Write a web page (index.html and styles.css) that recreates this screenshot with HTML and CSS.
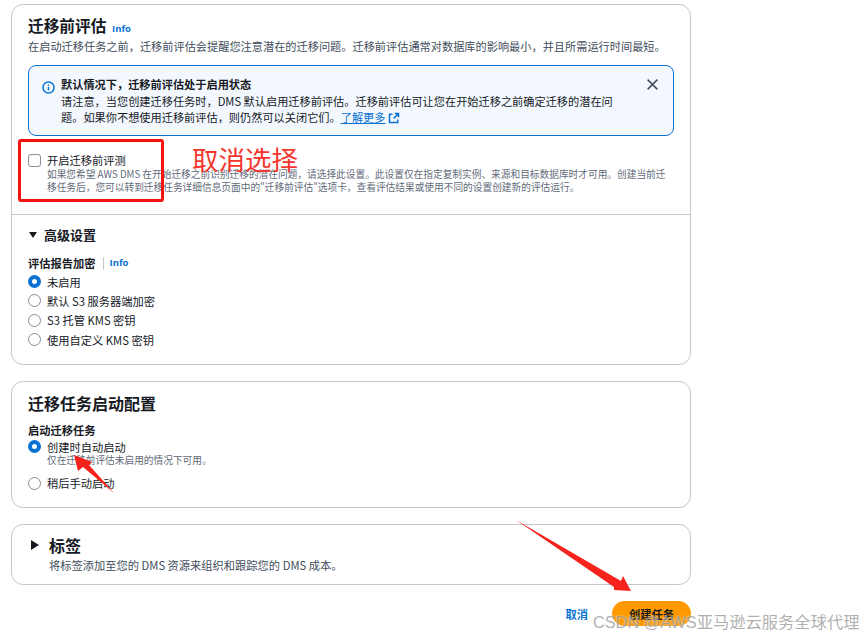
FILE: index.html
```html
<!DOCTYPE html>
<html lang="zh">
<head>
<meta charset="utf-8">
<title>迁移前评估</title>
<link rel="stylesheet" href="styles.css">
</head>
<body>
<main class="page">
  <section class="card card-assess">
    <div class="pad-top">
      <h2 class="title title-main">迁移前评估 <a class="info info-title">Info</a></h2>
      <p class="desc">在启动迁移任务之前，迁移前评估会提醒您注意潜在的迁移问题。迁移前评估通常对数据库的影响最小，并且所需运行时间最短。</p>
      <div class="alert">
        <svg class="alert-icon" viewBox="0 0 16 16" width="13" height="13"><circle cx="8" cy="8" r="6.8" fill="none" stroke="#0972d3" stroke-width="1.8"/><path d="M8 7v4.6M8 4.2v1.6" stroke="#0972d3" stroke-width="1.8" fill="none"/></svg>
        <div class="alert-body">
          <div class="alert-head">默认情况下，迁移前评估处于启用状态</div>
          <div class="alert-text">请注意，当您创建迁移任务时，DMS 默认启用迁移前评估。迁移前评估可让您在开始迁移之前确定迁移的潜在问题。如果你不想使用迁移前评估，则仍然可以关闭它们。<a class="learn">了解更多</a> <svg class="ext" viewBox="0 0 16 16" width="12" height="12"><path d="M9 2H14V7M14 2L7.5 8.5M6 3H2V14H13V10" fill="none" stroke="#0972d3" stroke-width="2"/></svg></div>
        </div>
        <svg class="alert-close" viewBox="0 0 16 16" width="13" height="13"><path d="M2 2L14 14M14 2L2 14" stroke="#414d5c" stroke-width="1.8" fill="none"/></svg>
      </div>
      <div class="check-row">
        <span class="checkbox"></span>
        <div class="check-text">
          <div class="check-label">开启迁移前评测</div>
          <div class="check-desc">如果您希望 AWS DMS 在开始迁移之前识别迁移的潜在问题，请选择此设置。此设置仅在指定复制实例、来源和目标数据库时才可用。创建当前迁移任务后，您可以转到迁移任务详细信息页面中的"迁移前评估"选项卡，查看评估结果或使用不同的设置创建新的评估运行。</div>
        </div>
      </div>
    </div>
    <div class="advanced">
      <div class="expander"><span class="tri-down"></span>高级设置</div>
      <div class="field-label">评估报告加密<span class="sep"></span><a class="info">Info</a></div>
      <div class="radios">
        <div class="radio-row"><span class="radio on"></span>未启用</div>
        <div class="radio-row"><span class="radio"></span>默认 S3 服务器端加密</div>
        <div class="radio-row"><span class="radio"></span>S3 托管 KMS 密钥</div>
        <div class="radio-row"><span class="radio"></span>使用自定义 KMS 密钥</div>
      </div>
    </div>
  </section>

  <section class="card card-start">
    <h2 class="title title-start">迁移任务启动配置</h2>
    <div class="field-label field-start">启动迁移任务</div>
    <div class="radio-row tight"><span class="radio on"></span>创建时自动启动</div>
    <div class="radio-desc">仅在迁移前评估未启用的情况下可用。</div>
    <div class="radio-row later"><span class="radio"></span>稍后手动启动</div>
  </section>

  <section class="card card-tags">
    <h2 class="title tag-title"><span class="tri-right"></span>标签</h2>
    <p class="tag-desc">将标签添加至您的 DMS 资源来组织和跟踪您的 DMS 成本。</p>
  </section>

  <div class="actions">
    <a class="cancel">取消</a>
    <button class="primary">创建任务</button>
  </div>
</main>

<div class="red-box"></div>
<div class="red-note">取消选择</div>
<svg class="arrows" viewBox="0 0 864 637" width="864" height="637">
  <path d="M114 493L83 467L78 471L74 455L92 462L89 465Z" fill="#f5231b"/>
  <path d="M516 520L621 581L623 576L631 591L614 590L614 587Z" fill="#f5231b"/>
</svg>
<div class="watermark">CSDN @AWS亚马逊云服务全球代理</div>
</body>
</html>
```
FILE: styles.css
```css
* { box-sizing: border-box; }
html, body { margin: 0; padding: 0; height: 637px; overflow: hidden; background: #fff; }
body { font-family: "Noto Sans CJK SC", "Open Sans", sans-serif; color: #16191f; font-size: 11.25px; position: relative; }
.page { width: 680px; margin-left: 11px; padding-top: 4px; display: flex; flex-direction: column; }
.card { border: 1px solid #c6c6cd; border-radius: 12px; background: #fff; }
.card-assess { height: 361px; }
.pad-top { padding: 9px 16px 0; height: 210px; border-bottom: 1px solid #c6c6cd; }
.title { margin: 0; font-size: 16px; line-height: 24px; font-weight: 700; color: #16191f; }
.title-main { font-size: 15.7px; height: 24px; }
.info { color: #0972d3; font-size: 9.5px; font-weight: 700; font-family: "Open Sans", sans-serif; }
.info-title { margin-left: 2px; }
.desc { margin: 0; font-size: 11.2px; line-height: 16px; color: #414d5c; white-space: nowrap; }
.alert { margin-top: 11px; height: 71px; border: 1px solid #0972d3; border-radius: 8px; background: #f2f8fd; padding: 10px 13px; display: flex; position: relative; }
.alert-icon { margin-top: 5px; flex: none; }
.alert-body { margin-left: 6px; width: 562px; }
.alert-head { font-weight: 700; line-height: 17px; font-size: 11.2px; }
.alert-text { line-height: 16px; font-size: 11.2px; color: #16191f; }
.learn { color: #0972d3; text-decoration: underline; }
.ext { vertical-align: -2px; }
.alert-close { position: absolute; right: 14px; top: 12px; }
.check-row { display: flex; margin-top: 16px; }
.checkbox { width: 13px; height: 13px; border: 1.5px solid #8c8c94; border-radius: 3px; margin-top: 2px; flex: none; }
.check-text { margin-left: 6px; }
.check-label { font-size: 11.25px; line-height: 16px; }
.check-desc { font-size: 9.7px; line-height: 13px; color: #5f6b7a; }
.advanced { padding: 10px 16px 0; }
.expander { font-size: 13px; font-weight: 700; line-height: 20px; display: flex; align-items: center; }
.tri-down { width: 0; height: 0; border-left: 4.5px solid transparent; border-right: 4.5px solid transparent; border-top: 6px solid #16191f; margin: 0 7px 0 1px; }
.field-label { font-size: 11.25px; font-weight: 700; line-height: 16px; margin-top: 10px; display: flex; align-items: center; }
.sep { width: 1px; height: 13px; background: #c6c6cd; margin: 0 6px 0 7px; }
.radios { margin-top: 1px; }
.radio-row { display: flex; align-items: center; height: 19.3px; font-size: 11.25px; color: #16191f; }
.radio { width: 13px; height: 13px; border-radius: 50%; border: 1.5px solid #8c8c94; margin-right: 6px; flex: none; background: #fff; }
.radio.on { border: 4px solid #0972d3; }
.card-start { margin-top: 16px; height: 127px; padding: 9px 16px 0; }
.title-start { line-height: 24px; }
.field-start { margin-top: 7px; line-height: 16px; }
.tight { height: 17px; }
.radio-desc { margin: -1px 0 0 19px; font-size: 9.7px; line-height: 12px; color: #5f6b7a; }
.later { margin-top: 9px; height: 16px; }
.card-tags { margin-top: 16px; height: 61px; padding: 8px 16px 0; }
.tag-title { display: flex; align-items: center; line-height: 24px; }
.tri-right { width: 0; height: 0; border-top: 5px solid transparent; border-bottom: 5px solid transparent; border-left: 8px solid #16191f; margin: 0 10px 0 3px; }
.tag-desc { margin: 0 0 0 21px; font-size: 11.25px; line-height: 16px; color: #414d5c; }
.actions { margin-top: 16px; display: flex; justify-content: flex-end; align-items: center; height: 25px; }
.cancel { color: #0972d3; font-size: 11.25px; font-weight: 700; margin-right: 24px; }
.primary { width: 79px; height: 25px; border: 0; border-radius: 12.5px; background: #ff9900; color: #16191f; font: 700 11.25px "Noto Sans CJK SC", sans-serif; padding: 0; }
.red-box { position: absolute; left: 18px; top: 139px; width: 146px; height: 63px; border: 3.5px solid #f5120f; border-radius: 3px; }
.red-note { position: absolute; left: 192px; top: 139px; font-size: 26.5px; line-height: 40px; color: #f5362e; }
.arrows { position: absolute; left: 0; top: 0; pointer-events: none; }
.watermark { position: absolute; left: 593px; top: 611px; font-family: "Liberation Sans", "Noto Sans CJK SC", sans-serif; font-size: 16.3px; line-height: 22px; color: rgba(130,130,130,.65); white-space: nowrap; text-shadow: 0 0 2px rgba(255,255,255,.8); }
```
